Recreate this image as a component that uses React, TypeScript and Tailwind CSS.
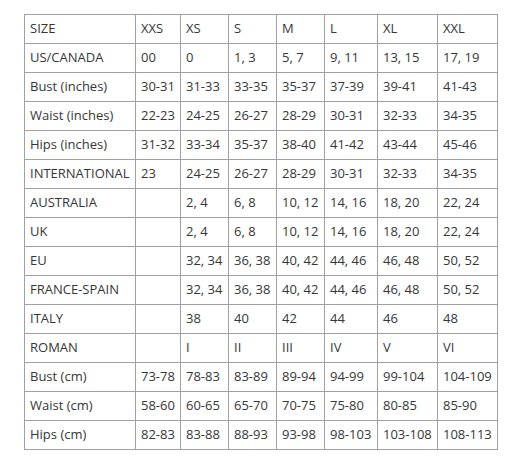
const columns = ["SIZE", "XXS", "XS", "S", "M", "L", "XL", "XXL"];

const rows: string[][] = [
  ["US/CANADA", "00", "0", "1, 3", "5, 7", "9, 11", "13, 15", "17, 19"],
  ["Bust (inches)", "30-31", "31-33", "33-35", "35-37", "37-39", "39-41", "41-43"],
  ["Waist (inches)", "22-23", "24-25", "26-27", "28-29", "30-31", "32-33", "34-35"],
  ["Hips (inches)", "31-32", "33-34", "35-37", "38-40", "41-42", "43-44", "45-46"],
  ["INTERNATIONAL", "23", "24-25", "26-27", "28-29", "30-31", "32-33", "34-35"],
  ["AUSTRALIA", "", "2, 4", "6, 8", "10, 12", "14, 16", "18, 20", "22, 24"],
  ["UK", "", "2, 4", "6, 8", "10, 12", "14, 16", "18, 20", "22, 24"],
  ["EU", "", "32, 34", "36, 38", "40, 42", "44, 46", "46, 48", "50, 52"],
  ["FRANCE-SPAIN", "", "32, 34", "36, 38", "40, 42", "44, 46", "46, 48", "50, 52"],
  ["ITALY", "", "38", "40", "42", "44", "46", "48"],
  ["ROMAN", "", "I", "II", "III", "IV", "V", "VI"],
  ["Bust (cm)", "73-78", "78-83", "83-89", "89-94", "94-99", "99-104", "104-109"],
  ["Waist (cm)", "58-60", "60-65", "65-70", "70-75", "75-80", "80-85", "85-90"],
  ["Hips (cm)", "82-83", "83-88", "88-93", "93-98", "98-103", "103-108", "108-113"],
];

const widths = ["w-[111px]", "w-[45px]", "w-[48px]", "w-[48px]", "w-[48px]", "w-[53px]", "w-[60px]", "w-[60px]"];

const Cell = ({ text }: { text: string }) => (
  <td className="h-[29px] border border-[#a0a0a0] px-[5px] py-0 align-middle whitespace-nowrap">
    {text}
  </td>
);

const App = () => {
  return (
    <div className="min-h-[462px] w-[517px] bg-white pl-[24px] pt-[14px] font-['Open_Sans',sans-serif] text-[13px] text-[#363636]">
      <table className="table-fixed border-collapse">
        <colgroup>
          {widths.map((w, i) => (
            <col key={i} className={w} />
          ))}
        </colgroup>
        <tbody>
          <tr>
            {columns.map((c) => (
              <Cell key={c} text={c} />
            ))}
          </tr>
          {rows.map((r) => (
            <tr key={r[0]}>
              {r.map((v, i) => (
                <Cell key={i} text={v} />
              ))}
            </tr>
          ))}
        </tbody>
      </table>
    </div>
  );
};

export default App;
